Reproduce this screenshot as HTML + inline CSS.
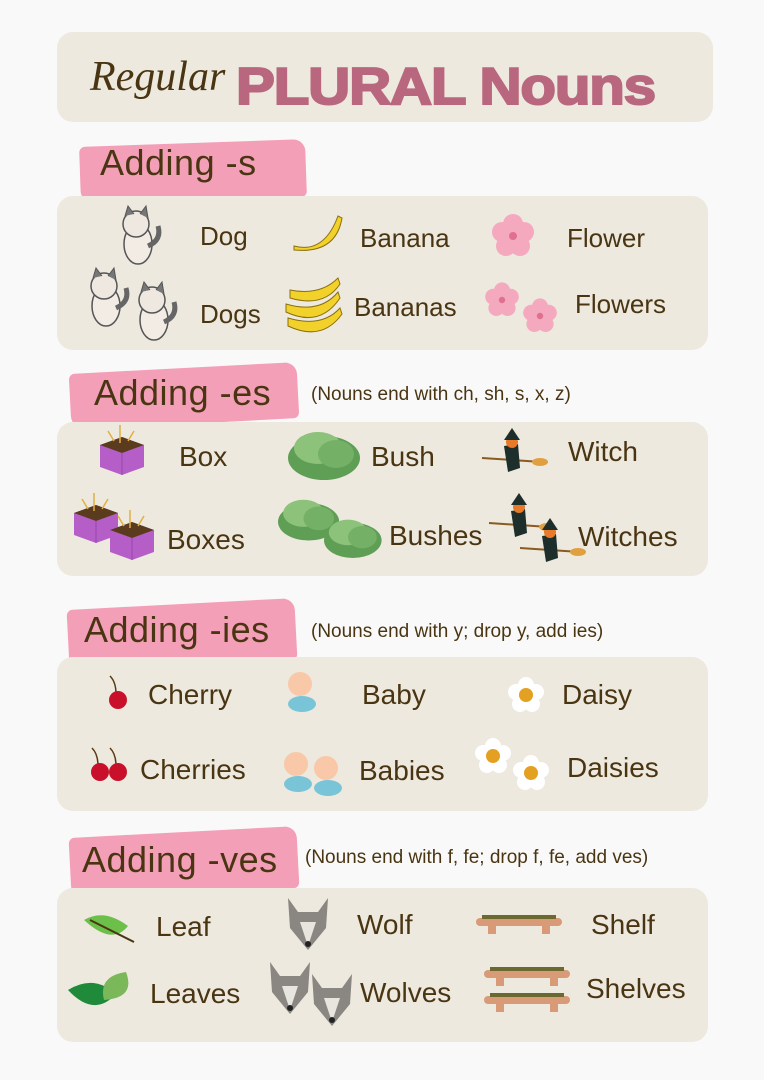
<!DOCTYPE html>
<html><head><meta charset="utf-8"><style>
*{margin:0;padding:0;box-sizing:border-box}
body{width:764px;height:1080px;background:#f9f9f9;position:relative;overflow:hidden;font-family:"Liberation Sans",sans-serif;color:#4a3512}
.p{position:absolute;background:#ede9df;border-radius:16px}
.w{position:absolute;font-size:26px;line-height:30px;white-space:nowrap}
.ban{position:absolute;background:#f49fb8;border-radius:6px 12px 6px 14px}
.h{position:absolute;font-size:36px;line-height:40px;white-space:nowrap;letter-spacing:0.5px}
.n{position:absolute;font-size:19px;line-height:22px;white-space:nowrap}
svg{position:absolute}
</style></head><body>
<div class="p" style="left:57px;top:32px;width:656px;height:90px"></div>
<div style="position:absolute;left:90px;top:42px;font-family:'Liberation Serif',serif;font-style:italic;font-size:42px;line-height:70px;color:#4a3512">Regular</div>
<div style="position:absolute;left:236px;top:54px;font-family:'Liberation Sans',sans-serif;font-weight:bold;font-size:52px;line-height:66px;color:#b9677f;letter-spacing:-1px;transform:scaleX(1.12);transform-origin:left center;-webkit-text-stroke:2px #b9677f">PLURAL Nouns</div>

<div class="ban" style="left:80px;top:143px;width:226px;height:58px;transform:rotate(-2deg)"></div>
<div class="h" style="left:100px;top:143px">Adding -s</div>
<div class="p" style="left:57px;top:196px;width:651px;height:154px"></div>

<div class="ban" style="left:70px;top:368px;width:228px;height:56px;transform:rotate(-3deg)"></div>
<div class="h" style="left:94px;top:373px">Adding -es</div>
<div class="n" style="left:311px;top:384px">(Nouns end with ch, sh, s, x, z)</div>
<div class="p" style="left:57px;top:422px;width:651px;height:154px"></div>

<div class="ban" style="left:68px;top:604px;width:228px;height:62px;transform:rotate(-3deg)"></div>
<div class="h" style="left:84px;top:610px">Adding -ies</div>
<div class="n" style="left:311px;top:621px">(Nouns end with y; drop y, add ies)</div>
<div class="p" style="left:57px;top:657px;width:651px;height:154px"></div>

<div class="ban" style="left:70px;top:832px;width:228px;height:62px;transform:rotate(-3deg)"></div>
<div class="h" style="left:82px;top:840px">Adding -ves</div>
<div class="n" style="left:305px;top:847px">(Nouns end with f, fe; drop f, fe, add ves)</div>
<div class="p" style="left:57px;top:888px;width:651px;height:154px"></div>

<div class="w" style="left:200px;top:221px">Dog</div>
<div class="w" style="left:360px;top:223px">Banana</div>
<div class="w" style="left:567px;top:223px">Flower</div>
<div class="w" style="left:200px;top:299px">Dogs</div>
<div class="w" style="left:354px;top:292px">Bananas</div>
<div class="w" style="left:575px;top:289px">Flowers</div>

<div class="w" style="left:179px;top:442px;font-size:28px">Box</div>
<div class="w" style="left:371px;top:442px;font-size:28px">Bush</div>
<div class="w" style="left:568px;top:437px;font-size:28px">Witch</div>
<div class="w" style="left:167px;top:525px;font-size:28px">Boxes</div>
<div class="w" style="left:389px;top:521px;font-size:28px">Bushes</div>
<div class="w" style="left:578px;top:522px;font-size:28px">Witches</div>

<div class="w" style="left:148px;top:680px;font-size:28px">Cherry</div>
<div class="w" style="left:362px;top:680px;font-size:28px">Baby</div>
<div class="w" style="left:562px;top:680px;font-size:28px">Daisy</div>
<div class="w" style="left:140px;top:755px;font-size:28px">Cherries</div>
<div class="w" style="left:359px;top:756px;font-size:28px">Babies</div>
<div class="w" style="left:567px;top:753px;font-size:28px">Daisies</div>

<div class="w" style="left:156px;top:912px;font-size:28px">Leaf</div>
<div class="w" style="left:357px;top:910px;font-size:28px">Wolf</div>
<div class="w" style="left:591px;top:910px;font-size:28px">Shelf</div>
<div class="w" style="left:150px;top:979px;font-size:28px">Leaves</div>
<div class="w" style="left:360px;top:978px;font-size:28px">Wolves</div>
<div class="w" style="left:586px;top:974px;font-size:28px">Shelves</div>

<svg width="764" height="1080" style="left:0;top:0">
<defs>
<g id="dog"><ellipse cx="20" cy="38" rx="14" ry="20" fill="#f3ece4" stroke="#555" stroke-width="1.5"/><circle cx="18" cy="18" r="13" fill="#eee8e0" stroke="#555" stroke-width="1.5"/><path d="M7 10 L10 0 L16 8 M22 8 L28 0 L30 12" fill="#777" stroke="#555"/><path d="M30 40 q14 -6 10 -20" stroke="#666" stroke-width="5" fill="none"/></g>
<g id="flw"><circle cx="0" cy="-12" r="10" fill="#f4a9bf"/><circle cx="11" cy="-4" r="10" fill="#f4a9bf"/><circle cx="7" cy="10" r="10" fill="#f4a9bf"/><circle cx="-7" cy="10" r="10" fill="#f4a9bf"/><circle cx="-11" cy="-4" r="10" fill="#f4a9bf"/><circle r="4" fill="#e07090"/></g>
<g id="box"><path d="M0 8 L22 0 L44 8 L44 30 L22 38 L0 30Z" fill="#b65ec8"/><path d="M0 8 L22 16 L44 8 L22 0Z" fill="#5a3b1e"/><path d="M22 16 L22 38" stroke="#9448a8"/><path d="M20 6 L20 -12 M14 4 L8 -6 M28 4 L34 -6" stroke="#e0b040" stroke-width="1.5"/></g>
<g id="bush"><ellipse cx="36" cy="28" rx="36" ry="22" fill="#5f9e55"/><ellipse cx="30" cy="18" rx="24" ry="16" fill="#8cc27a"/><ellipse cx="48" cy="24" rx="18" ry="14" fill="#74b065"/></g>
<g id="witch"><path d="M0 20 L60 24" stroke="#8a5a20" stroke-width="2"/><ellipse cx="58" cy="24" rx="8" ry="4" fill="#e0a040"/><path d="M22 8 L36 6 L38 30 L26 34Z" fill="#1e2e2a"/><circle cx="30" cy="4" r="6" fill="#e87a2a"/><path d="M22 2 L30 -10 L38 2Z" fill="#1e2e2a"/></g>
<g id="cher"><path d="M0 0 q6 6 6 18" stroke="#5a3a10" stroke-width="1.5" fill="none"/><circle cx="8" cy="24" r="9" fill="#c8102a"/></g>
<g id="baby"><circle cx="14" cy="12" r="12" fill="#f8c8a8"/><ellipse cx="16" cy="32" rx="14" ry="8" fill="#7ac4d8"/></g>
<g id="daisy"><circle cx="0" cy="-10" r="8" fill="#fff"/><circle cx="10" cy="-3" r="8" fill="#fff"/><circle cx="6" cy="9" r="8" fill="#fff"/><circle cx="-6" cy="9" r="8" fill="#fff"/><circle cx="-10" cy="-3" r="8" fill="#fff"/><circle r="7" fill="#e4a020"/></g>
<g id="wolf"><path d="M0 0 L10 14 L30 14 L40 0 L38 30 L20 52 L2 30Z" fill="#8a8682"/><path d="M12 24 L28 24 L20 48Z" fill="#e8e4de"/><circle cx="20" cy="46" r="3" fill="#222"/></g>
<g id="shelf"><rect x="0" y="0" width="86" height="8" rx="4" fill="#d99a78"/><rect x="6" y="-3" width="74" height="4" fill="#6a6a30"/><rect x="12" y="8" width="8" height="8" fill="#d99a78"/><rect x="66" y="8" width="8" height="8" fill="#d99a78"/></g>
</defs>
<use href="#dog" x="118" y="206"/>
<use href="#dog" x="86" y="268"/><use href="#dog" x="134" y="282"/>
<path d="M294 246 q30 8 44 -30 l4 2 q-6 36 -48 32z" fill="#f2d22a" stroke="#8a7010"/>
<g fill="#f2d22a" stroke="#8a7010"><path d="M286 304 q34 10 52 -12 l2 6 q-20 30 -54 14z"/><path d="M288 318 q34 10 52 -10 l2 6 q-20 28 -54 12z"/><path d="M290 290 q30 6 48 -12 l2 6 q-16 24 -50 14z"/></g>
<use href="#flw" x="513" y="236"/>
<g transform="translate(502 300) scale(.8)"><use href="#flw"/></g><g transform="translate(540 316) scale(.8)"><use href="#flw"/></g>
<use href="#box" x="100" y="437"/>
<use href="#box" x="74" y="505"/><use href="#box" x="110" y="522"/>
<use href="#bush" x="288" y="430"/>
<g transform="translate(278 498) scale(.85)"><use href="#bush"/></g><g transform="translate(324 518) scale(.8)"><use href="#bush"/></g>
<use href="#witch" x="482" y="438"/>
<use href="#witch" x="489" y="503"/><use href="#witch" x="520" y="528"/>
<use href="#cher" x="110" y="676"/>
<use href="#cher" x="92" y="748"/><use href="#cher" x="110" y="748"/>
<use href="#baby" x="286" y="672"/>
<use href="#baby" x="282" y="752"/><use href="#baby" x="312" y="756"/>
<use href="#daisy" x="526" y="695"/>
<use href="#daisy" x="493" y="756"/><use href="#daisy" x="531" y="773"/>
<path d="M84 920 q20 -12 44 6 q-16 20 -44 -6z" fill="#6cc04a"/><path d="M90 920 L134 942" stroke="#4a3512" stroke-width="2"/>
<path d="M68 990 q26 -16 48 4 q-22 24 -48 -4z" fill="#1e8a3a"/><path d="M104 1000 q-6 -24 22 -28 q10 26 -22 28z" fill="#7ab85a"/>
<use href="#wolf" x="288" y="898"/>
<use href="#wolf" x="270" y="962"/><use href="#wolf" x="312" y="974"/>
<use href="#shelf" x="476" y="918"/>
<use href="#shelf" x="484" y="970"/><use href="#shelf" x="484" y="996"/>
</svg>
</body></html>
